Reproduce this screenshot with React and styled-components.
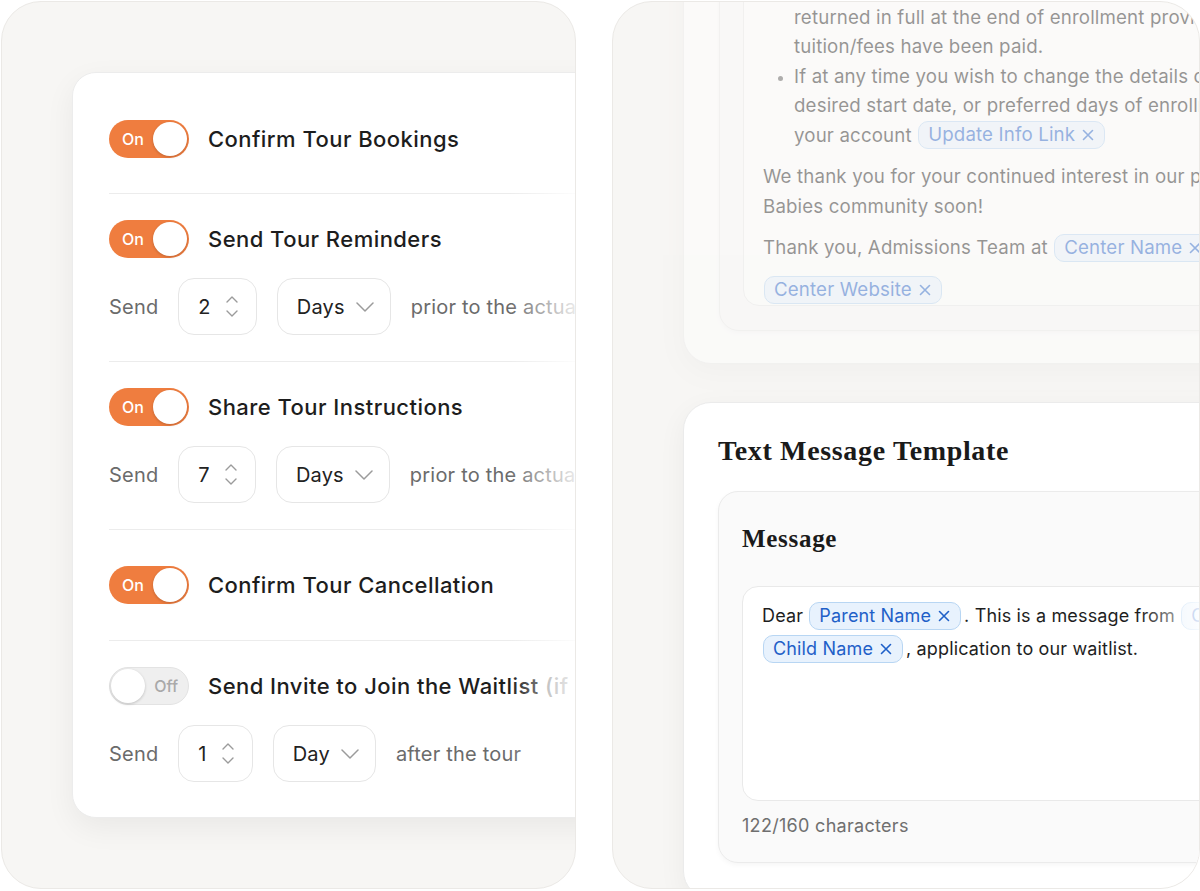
import React from "react";
import styled, { createGlobalStyle } from "styled-components";

const GlobalStyle = createGlobalStyle`
  html, body {
    margin: 0;
    padding: 0;
    background: #ffffff;
    overflow: hidden;
  }
  body {
    font-family: Inter, "Noto Sans", sans-serif;
    color: #1e1e1e;
    -webkit-font-smoothing: antialiased;
  }
  * {
    box-sizing: border-box;
  }
`;

const Stage = styled.div`
  display: flex;
  gap: 36px;
  width: 1200px;
  height: 891px;
  padding: 1px 0 0 1px;
  overflow: hidden;
`;

const Panel = styled.section`
  flex: 0 0 ${(p) => p.$width}px;
  height: 888px;
  background: #f7f6f4;
  border: 1px solid #ebe9e6;
  border-radius: 40px;
  overflow: hidden;
  padding: ${(p) => p.$pad};
`;

/* ---------- left: tour settings ---------- */

const SettingsCard = styled.div`
  position: relative;
  width: 600px;
  background: #ffffff;
  border: 1px solid #ececec;
  border-radius: 24px;
  padding: 11px 0 9px 36px;
  box-shadow: 0 10px 30px rgba(0, 0, 0, 0.06);
`;

const EdgeFade = styled.div`
  position: absolute;
  top: 0;
  bottom: 0;
  left: ${(p) => p.$left}px;
  width: ${(p) => p.$width}px;
  background: linear-gradient(to right, rgba(255, 255, 255, 0), rgba(255, 255, 255, 0.88));
  pointer-events: none;
  z-index: 2;
`;

const Row = styled.div`
  display: flex;
  flex-direction: column;
  gap: 20px;
  padding: ${(p) => (p.$tall ? "36px 0 36px" : "26px 0")};
  &:first-child {
    padding-bottom: 35px;
  }
  & + & {
    border-top: 1px solid #ececec;
  }
`;

const ToggleLine = styled.div`
  display: flex;
  align-items: center;
  gap: 19px;
`;

const Switch = styled.span`
  display: flex;
  align-items: center;
  justify-content: space-between;
  flex-direction: ${(p) => (p.$on ? "row" : "row-reverse")};
  flex: 0 0 80px;
  height: 38px;
  padding: ${(p) => (p.$on ? "0 2px 0 13px" : "0 10px 0 1px")};
  border-radius: 19px;
  background: ${(p) => (p.$on ? "#ef7d3f" : "#efefef")};
  border: ${(p) => (p.$on ? "none" : "1px solid #e3e3e3")};
`;

const SwitchText = styled.span`
  font-size: 16px;
  font-weight: 500;
  color: ${(p) => (p.$on ? "#ffffff" : "#a9a9a9")};
`;

const Knob = styled.span`
  width: 34px;
  height: 34px;
  border-radius: 50%;
  background: #ffffff;
  box-shadow: 0 1px 3px rgba(0, 0, 0, 0.2);
`;

const Label = styled.span`
  font-size: 22px;
  font-weight: 500;
  color: #1d1d1d;
  white-space: nowrap;
  letter-spacing: 0.45px;
`;

const Muted = styled.span`
  color: #8a8a8a;
`;

const SendLine = styled.div`
  display: flex;
  align-items: center;
  gap: 20px;
  font-size: 20px;
  letter-spacing: 0.2px;
  color: #6b6b6b;
  white-space: nowrap;
`;

const Field = styled.div`
  display: inline-flex;
  align-items: center;
  gap: ${(p) => (p.$select ? 11 : 15)}px;
  height: 57px;
  padding: ${(p) => (p.$select ? "0 16px 0 19px" : "0 18px 0 19px")};
  border: 1px solid #e6e6e6;
  border-radius: 16px;
  font-size: 20px;
  color: #222222;
`;

const Arrows = styled.span`
  display: flex;
  flex-direction: column;
  gap: 7px;
`;

const ChevronDown = () => (
  <svg width="18" height="10" viewBox="0 0 18 10" fill="none" stroke="#9b9b9b" strokeWidth="1.5" strokeLinecap="round" strokeLinejoin="round">
    <path d="M1 1l8 8 8-8" />
  </svg>
);

const SmallUp = () => (
  <svg width="12" height="7" viewBox="0 0 12 7" fill="none" stroke="#9b9b9b" strokeWidth="1.4" strokeLinecap="round" strokeLinejoin="round">
    <path d="M1 6l5-5 5 5" />
  </svg>
);

const SmallDown = () => (
  <svg width="12" height="7" viewBox="0 0 12 7" fill="none" stroke="#9b9b9b" strokeWidth="1.4" strokeLinecap="round" strokeLinejoin="round">
    <path d="M1 1l5 5 5-5" />
  </svg>
);

function Toggle({ on }) {
  return (
    <Switch $on={on}>
      <SwitchText $on={on}>{on ? "On" : "Off"}</SwitchText>
      <Knob />
    </Switch>
  );
}

function Setting({ on, label, send, tall }) {
  return (
    <Row $tall={tall}>
      <ToggleLine>
        <Toggle on={on} />
        <Label>{label}</Label>
      </ToggleLine>
      {send && (
        <SendLine>
          Send
          <Field>
            {send.count}
            <Arrows>
              <SmallUp />
              <SmallDown />
            </Arrows>
          </Field>
          <Field $select>
            {send.unit}
            <ChevronDown />
          </Field>
          {send.tail}
        </SendLine>
      )}
    </Row>
  );
}

/* ---------- right: templates ---------- */

const Column = styled.div`
  display: flex;
  flex-direction: column;
  gap: 38px;
  margin-top: -92px;
`;

const TemplateCard = styled.div`
  position: relative;
  width: 600px;
  background: #ffffff;
  border: 1px solid #ebebeb;
  border-radius: 28px;
  padding: ${(p) => p.$pad};
  box-shadow: 0 8px 28px rgba(0, 0, 0, 0.05);
  opacity: ${(p) => (p.$faded ? 0.45 : 1)};
`;

const CardTitle = styled.h2`
  margin: 0 0 22px;
  font-family: "Liberation Serif", "Times New Roman", serif;
  font-weight: 700;
  font-size: 28px;
  line-height: 36px;
  letter-spacing: 0.65px;
  color: #1a1a1a;
`;

const MessageBox = styled.div`
  background: #fafafa;
  border: 1px solid #ebebeb;
  border-radius: 20px;
  padding: ${(p) => p.$pad};
  box-shadow: 0 2px 5px rgba(0, 0, 0, 0.04);
`;

const BoxTitle = styled.h3`
  margin: 0 0 31px;
  font-family: "Liberation Serif", "Times New Roman", serif;
  font-weight: 700;
  font-size: 25px;
  line-height: 32px;
  letter-spacing: 0.7px;
  color: #1a1a1a;
`;

const TextArea = styled.div`
  position: relative;
  background: #ffffff;
  border: 1px solid #e9e9e9;
  border-radius: 16px;
  padding: ${(p) => p.$pad};
  height: ${(p) => (p.$height ? `${p.$height}px` : "auto")};
  font-size: ${(p) => p.$size}px;
  line-height: ${(p) => p.$line}px;
  letter-spacing: 0.15px;
  color: #1e1e1e;
  white-space: nowrap;
`;

const Bullets = styled.ul`
  margin: 0;
  padding-left: 31px;
  li::marker {
    color: #555555;
    font-size: 14px;
  }
`;

const Para = styled.p`
  margin: 12px 0 0;
`;

const Counter = styled.div`
  margin-top: 13px;
  font-size: 18px;
  line-height: 24px;
  letter-spacing: 0.3px;
  color: #6f6f6f;
`;

const Tag = styled.span`
  display: inline-flex;
  align-items: center;
  gap: 7px;
  height: 28px;
  padding: 0 10px 0 9px;
  margin: 0 3px 0 1px;
  border: 1px solid #b8d6f3;
  border-radius: 10px;
  background: #e8f2fd;
  color: #1f60c8;
  vertical-align: middle;
  line-height: 1;
  position: relative;
  top: -1px;
`;

const ChipX = () => (
  <svg width="12" height="12" viewBox="0 0 12 12" fill="none" stroke="currentColor" strokeWidth="1.6" strokeLinecap="round">
    <path d="M1.5 1.5l9 9M10.5 1.5l-9 9" />
  </svg>
);

function Chip({ children }) {
  return (
    <Tag>
      {children}
      <ChipX />
    </Tag>
  );
}

export default function App() {
  return (
    <>
      <GlobalStyle />
      <Stage>
        <Panel $width={575} $pad="70px 0 0 70px">
          <SettingsCard>
            <Setting tall on label="Confirm Tour Bookings" />
            <Setting
              on
              label="Send Tour Reminders"
              send={{ count: "2", unit: "Days", tail: "prior to the actual tour" }}
            />
            <Setting
              on
              label="Share Tour Instructions"
              send={{ count: "7", unit: "Days", tail: "prior to the actual tour" }}
            />
            <Setting tall on label="Confirm Tour Cancellation" />
            <Setting
              on={false}
              label={
                <>
                  Send Invite to Join the Waitlist <Muted>(if requested)</Muted>
                </>
              }
              send={{ count: "1", unit: "Day", tail: "after the tour" }}
            />
            <EdgeFade $left={436} $width={68} />
          </SettingsCard>
        </Panel>

        <Panel $width={588} $pad="0 0 0 70px">
          <Column>
            <TemplateCard $faded $pad="20px 0 32px 35px">
              <MessageBox $pad="20px 0 24px 23px">
                <TextArea $pad="20px 0 0 19px" $line={29.5} $size={18.7}>
                  <Bullets>
                    <li>
                      The enrollment deposit is non-refundable and will be
                      <br />
                      returned in full at the end of enrollment provided all
                      <br />
                      tuition/fees have been paid.
                    </li>
                    <li>
                      If at any time you wish to change the details of your child,
                      <br />
                      desired start date, or preferred days of enrollment, please update
                      <br />
                      {"your account "}
                      <Chip>Update Info Link</Chip>
                    </li>
                  </Bullets>
                  <Para>
                    We thank you for your continued interest in our program and hope to welcome you to the Happy
                    <br />
                    Babies community soon!
                  </Para>
                  <Para>
                    {"Thank you, Admissions Team at "}
                    <Chip>Center Name</Chip>
                  </Para>
                  <Para>
                    <Chip>Center Website</Chip>
                  </Para>
                </TextArea>
              </MessageBox>
            </TemplateCard>

            <TemplateCard $pad="30px 0 35px 34px">
              <CardTitle>Text Message Template</CardTitle>
              <MessageBox $pad="31px 0 24px 23px">
                <BoxTitle>Message</BoxTitle>
                <TextArea $pad="12px 0 0 19px" $line={33} $size={18} $height={215}>
                  {"Dear "}
                  <Chip>Parent Name</Chip>
                  {". This is a message from "}
                  <Chip>Center Name</Chip>
                  {" regarding"}
                  <br />
                  <Chip>Child Name</Chip>
                  {", application to our waitlist."}
                  <EdgeFade $left={396} $width={62} />
                </TextArea>
                <Counter>122/160 characters</Counter>
              </MessageBox>
            </TemplateCard>
          </Column>
        </Panel>
      </Stage>
    </>
  );
}
